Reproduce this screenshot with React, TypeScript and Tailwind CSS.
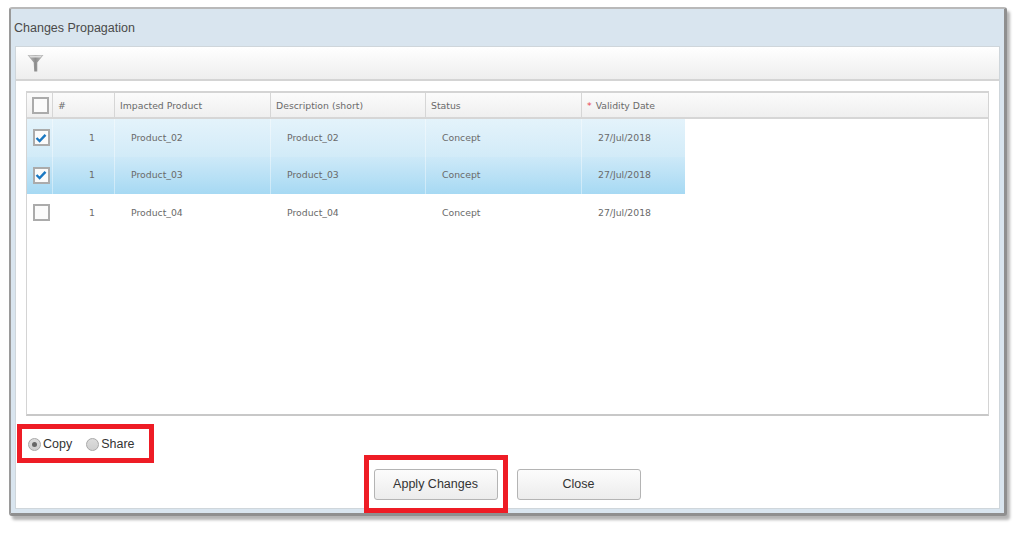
import React from "react";

const cols = [
  "w-[62px]",
  "w-[156px]",
  "w-[155px]",
  "w-[156px]",
  "w-[103px]",
];

const rows = [
  { id: "Product_02", checked: true, bg: "bg-gradient-to-b from-[#e4f3fb] to-[#d2ebf8]" },
  { id: "Product_03", checked: true, bg: "bg-gradient-to-b from-[#cde9f8] to-[#a6d9f3]" },
  { id: "Product_04", checked: false, bg: "bg-white" },
];

function Check({ checked }: { checked?: boolean }) {
  return (
    <span className="flex h-[17px] w-[17px] items-center justify-center border-2 border-[#ababab] bg-[#fbfbfb]">
      {checked && (
        <svg width="12" height="10" viewBox="0 0 12 10">
          <path d="M1.5 5 L4.6 8 L10.5 1.8" fill="none" stroke="#1a78c2" strokeWidth="2.4" />
        </svg>
      )}
    </span>
  );
}

function Radio({ on }: { on?: boolean }) {
  return (
    <span className="flex h-[13px] w-[13px] items-center justify-center rounded-full border border-[#a8a8a8] bg-gradient-to-b from-[#dcdcdc] to-[#cfcfcf]">
      {on && <span className="h-[5px] w-[5px] rounded-full bg-[#666]" />}
    </span>
  );
}

export default function App() {
  return (
    <div className="relative h-[533px] w-[1021px] overflow-hidden bg-white font-['Liberation_Sans',sans-serif]">
      <div className="pl-[9px] pt-[7px]">
        <div className="flex h-[509px] w-[998px] flex-col rounded-[3px] border-t-2 border-r-[3px] border-b-[3px] border-l-2 border-t-[#b9b9b9] border-r-[#8f8f8f] border-b-[#8f8f8f] border-l-[#9a9a9a] bg-[#d9e5ef] px-[4px] pb-[4px] shadow-[3px_4px_3px_#b5b5b5]">
          <div className="flex h-[37px] shrink-0 items-center -ml-[1px] pt-[1px] text-[12.5px] text-[#4a4a4a]">
            Changes Propagation
          </div>
          <div className="flex min-h-0 flex-1 flex-col border border-[#cfd6db] bg-white">
            <div className="flex h-[34px] shrink-0 items-center border-b-2 border-[#d4d4d4] bg-gradient-to-b from-white to-[#eeeeee] pl-[11px]">
              <svg width="17" height="18" viewBox="0 0 17 18">
                <defs>
                  <linearGradient id="fn" x1="0" x2="1" y1="0" y2="0">
                    <stop offset="0" stopColor="#c0c0c0" />
                    <stop offset="0.5" stopColor="#8e8e8e" />
                    <stop offset="1" stopColor="#bdbdbd" />
                  </linearGradient>
                </defs>
                <path d="M0.5 1 H16.5 L10.3 8.5 V17.5 H7.2 L6.7 8.5 Z" fill="url(#fn)" />
                <path d="M2 1.6 H15 L13.4 3.6 H3.6 Z" fill="#dcdcdc" />
              </svg>
            </div>
            <div className="flex min-h-0 flex-1 flex-col px-[10px] pb-[6px] pt-[10px]">
              <div className="flex h-[325px] w-[963px] flex-col border-x border-y-2 border-t-[#d4d4d4] border-r-[#d4d4d4] border-b-[#c8c8c8] border-l-[#d4d4d4] font-['DejaVu_Sans',sans-serif] text-[9.3px] text-[#6a6a6a]">
                <div className="flex h-[26px] shrink-0 border-b-2 border-[#d6d6d6] bg-gradient-to-b from-[#fbfbfb] to-[#efefef]">
                  <div className="flex w-[26px] items-center justify-center border-r border-[#d6d6d6] pl-[2px]">
                    <Check />
                  </div>
                  {["#", "Impacted Product", "Description (short)", "Status"].map((h, i) => (
                    <div key={h} className={`${cols[i]} flex items-center border-r border-[#d6d6d6] pl-[5px] pt-[1px]`}>
                      {h}
                    </div>
                  ))}
                  <div className="flex flex-1 items-center pl-[5px] pt-[1px]">
                    <span className="mr-[4px] text-[#e8434f]">*</span>Validity Date
                  </div>
                </div>
                {rows.map((r) => (
                  <div key={r.id} className="flex h-[37.5px] shrink-0">
                    <div className={`${r.bg} flex w-[26px] items-center justify-center border-r border-[#ffffff66] pl-[3px]`}>
                      <Check checked={r.checked} />
                    </div>
                    <div className={`${cols[0]} ${r.bg} flex items-center border-r border-[#ffffff66] pl-[36px]`}>1</div>
                    <div className={`${cols[1]} ${r.bg} flex items-center border-r border-[#ffffff66] pl-[16px]`}>{r.id}</div>
                    <div className={`${cols[2]} ${r.bg} flex items-center border-r border-[#ffffff66] pl-[16px]`}>{r.id}</div>
                    <div className={`${cols[3]} ${r.bg} flex items-center border-r border-[#ffffff66] pl-[16px]`}>Concept</div>
                    <div className={`${cols[4]} ${r.bg} flex items-center pl-[16px]`}>27/Jul/2018</div>
                  </div>
                ))}
              </div>
              <div className="mt-[19px] flex items-center text-[12.5px] text-[#333]">
                <span className="ml-[2px] flex items-center gap-[2px]"><Radio on /> Copy</span>
                <span className="ml-[14px] flex items-center gap-[2px]"><Radio /> Share</span>
              </div>
              <div className="mt-[15px] flex justify-center gap-[19px] pr-[1px] text-[12.5px] text-[#333]">
                <button className="h-[31px] w-[124px] rounded-[3px] border border-[#b4b4b4] bg-gradient-to-b from-[#fcfcfc] to-[#ececec]">Apply Changes</button>
                <button className="h-[31px] w-[124px] rounded-[3px] border border-[#b4b4b4] bg-gradient-to-b from-[#fcfcfc] to-[#ececec]">Close</button>
              </div>
            </div>
          </div>
        </div>
      </div>
      <div className="absolute left-[17px] top-[424px] h-[39px] w-[137px] border-[5px] border-[#ee1c25]" />
      <div className="absolute left-[364px] top-[455px] h-[58px] w-[144px] border-[5px] border-[#ee1c25]" />
    </div>
  );
}
